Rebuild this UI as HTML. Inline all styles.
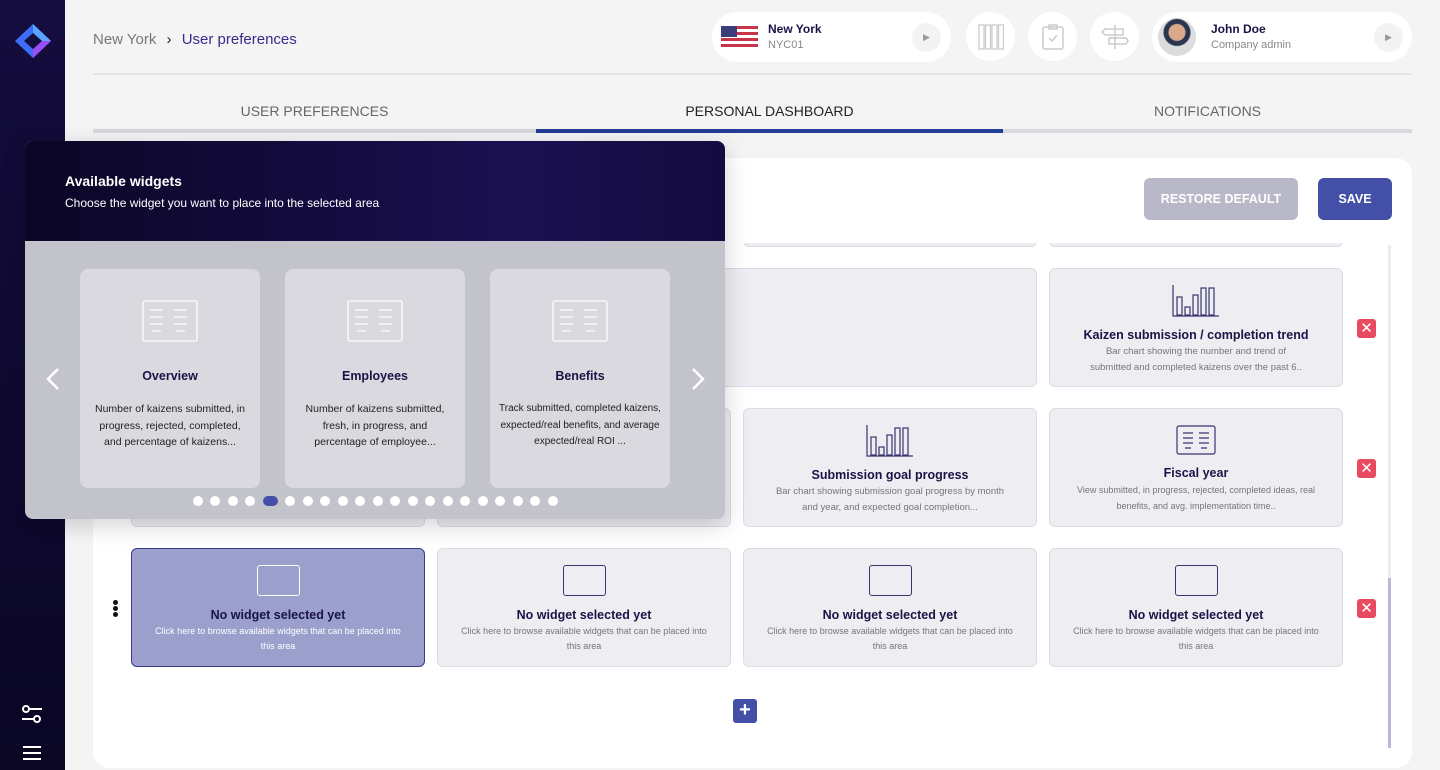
<!DOCTYPE html>
<html><head><meta charset="utf-8"><style>
*{box-sizing:border-box;margin:0;padding:0}
body{width:1440px;height:770px;overflow:hidden;background:#f4f4f5;font-family:"Liberation Sans",sans-serif;position:relative}
.abs{position:absolute}
.side{left:0;top:0;width:65px;height:770px;background:linear-gradient(180deg,#140d3e,#0a0624)}
.pill{background:#fff;border-radius:25px;height:50px;top:12px}
.circ{background:#fff;border-radius:50%;width:49px;height:49px;top:12px}
.card{background:#ededf2;border:1px solid #dcdce4;border-radius:6px;text-align:center}
.card h4{font-size:12.5px;color:#1a1446;margin-top:6px}
.card p{font-size:9.5px;color:#777;line-height:16px;margin-top:2px;padding:0 28px}
.card.e p{font-size:9px;line-height:15px;padding:0 22px}
.x{width:19px;height:19px;background:#e84a5f;border-radius:3px;color:#fff;font-size:15px;line-height:19px;text-align:center;left:1357px}
.ov{left:25px;top:141px;width:700px;height:378px;border-radius:8px;overflow:hidden;background:#c3c3cc;box-shadow:0 6px 24px rgba(0,0,0,.18)}
.wc{top:128px;width:180px;height:219px;background:#d9d9df;border-radius:8px;text-align:center}
.wc h4{font-size:12.5px;color:#1a1446;margin-top:6px}
.wc p{font-size:10.5px;color:#222;line-height:16.5px;margin-top:18px;padding:0 12px}
.dot{top:355px;width:10px;height:10px;border-radius:5px;background:#fff}
</style></head><body>
<div class="abs side">
<svg class="abs" style="left:13px;top:22px" width="40" height="38" viewBox="0 0 40 38"><polygon points="20,2 38,19 20,36 2,19" fill="#3b6ef5"/><polygon points="20,2 38,19 29,19 20,11" fill="#5aa2ff"/><polygon points="38,19 20,36 20,27 29,19" fill="#9a4df2"/><polygon points="20,11 29,19 20,27 11,19" fill="#140d3e"/></svg>
<svg class="abs" style="left:21px;top:704px" width="22" height="20" viewBox="0 0 22 20" fill="none" stroke="#fff" stroke-width="2"><circle cx="5" cy="5" r="3"/><line x1="8" y1="5" x2="21" y2="5"/><circle cx="16" cy="15" r="3"/><line x1="1" y1="15" x2="13" y2="15"/></svg>
<div class="abs" style="left:23px;top:746px;width:18px;height:2px;background:#fff;box-shadow:0 6px 0 #fff,0 12px 0 #fff"></div>
</div>
<div class="abs" style="left:93px;top:31px;font-size:15px;color:#777">New York <span style="color:#222;margin:0 6px">›</span> <span style="color:#3c2a8a">User preferences</span></div>
<div class="abs pill" style="left:712px;width:239px">
<div class="abs" style="left:9px;top:14px;width:37px;height:21px;background:repeating-linear-gradient(#c8354a 0 3px,#fff 3px 6px)"><div style="width:16px;height:11px;background:#3a3f7a"></div></div>
<div class="abs" style="left:56px;top:10px;font-size:12px;font-weight:bold;color:#1a1446">New York</div>
<div class="abs" style="left:56px;top:27px;font-size:11px;color:#888">NYC01</div>
<div class="abs" style="left:200px;top:11px;width:29px;height:29px;border-radius:50%;background:#f3f3f5;color:#999;font-size:9px;line-height:29px;text-align:center">▶</div>
</div>
<div class="abs circ" style="left:966px"><svg style="margin:12px 12px" width="26" height="26" viewBox="0 0 26 26" fill="none" stroke="#ccc" stroke-width="1.3"><rect x="1" y="1" width="5" height="24"/><rect x="7.5" y="1" width="5" height="24"/><rect x="14" y="1" width="5" height="24"/><rect x="20.5" y="1" width="5" height="24"/></svg></div>
<div class="abs circ" style="left:1028px"><svg style="margin:12px 14px" width="22" height="26" viewBox="0 0 22 26" fill="none" stroke="#ccc" stroke-width="1.5"><rect x="1" y="3" width="20" height="22" rx="2"/><rect x="7" y="1" width="8" height="4"/><path d="M7 14l3 3 5-6"/></svg></div>
<div class="abs circ" style="left:1090px"><svg style="margin:12px 11px" width="28" height="26" viewBox="0 0 28 26" fill="none" stroke="#ccc" stroke-width="1.5"><path d="M14 1v24M4 5h18v6H4l-3-3z M8 14h17l2 3-2 3H8z"/></svg></div>
<div class="abs pill" style="left:1152px;width:260px">
<div class="abs" style="left:6px;top:6px;width:38px;height:38px;border-radius:50%;background:radial-gradient(circle at 50% 38%,#d9a98a 0 8px,#2b3550 9px 13px,#dcdcdc 14px)"></div>
<div class="abs" style="left:59px;top:10px;font-size:12px;font-weight:bold;color:#1a1446">John Doe</div>
<div class="abs" style="left:59px;top:27px;font-size:11px;color:#888">Company admin</div>
<div class="abs" style="left:222px;top:11px;width:29px;height:29px;border-radius:50%;background:#f3f3f5;color:#999;font-size:9px;line-height:29px;text-align:center">▶</div>
</div>
<div class="abs" style="left:93px;top:73px;width:1319px;height:2px;background:#e4e4ea"></div>
<div class="abs" style="left:93px;top:103px;width:443px;text-align:center;font-size:14px;color:#666">USER PREFERENCES</div>
<div class="abs" style="left:536px;top:103px;width:467px;text-align:center;font-size:14px;color:#222">PERSONAL DASHBOARD</div>
<div class="abs" style="left:1003px;top:103px;width:409px;text-align:center;font-size:14px;color:#666">NOTIFICATIONS</div>
<div class="abs" style="left:93px;top:129px;width:1319px;height:4px;background:#d8d8e0"></div>
<div class="abs" style="left:536px;top:129px;width:467px;height:4px;background:#213e94"></div>
<div class="abs" style="left:93px;top:158px;width:1319px;height:610px;background:#fff;border-radius:16px"></div>
<div class="abs" style="left:1144px;top:178px;width:154px;height:42px;background:#b8b8c8;border-radius:6px;color:#fff;font-size:12.5px;font-weight:bold;text-align:center;line-height:42px">RESTORE DEFAULT</div>
<div class="abs" style="left:1318px;top:178px;width:74px;height:42px;background:#4450a8;border-radius:6px;color:#fff;font-size:12.5px;font-weight:bold;text-align:center;line-height:42px">SAVE</div>
<div class="abs" style="left:93px;top:243px;width:1300px;height:510px;overflow:hidden">
<div class="abs card" style="left:650px;top:-60px;width:294px;height:64px"></div>
<div class="abs card" style="left:956px;top:-60px;width:294px;height:64px"></div>
</div>
<div class="abs" style="left:1388px;top:245px;width:3px;height:503px;background:#ececf2"></div>
<div class="abs" style="left:1388px;top:578px;width:3px;height:170px;background:#b8b8d8"></div>
<div class="abs card" style="left:131px;top:268px;width:906px;height:119px"></div>
<div class="abs card" style="left:1049px;top:268px;width:294px;height:119px">
<svg style="margin-top:16px" width="48" height="32" viewBox="0 0 48 32" fill="none" stroke="#3a3470" stroke-width="1.2"><path d="M1 0v31h46"/><rect x="5" y="12" width="5" height="18"/><rect x="13" y="22" width="5" height="8"/><rect x="21" y="10" width="5" height="20"/><rect x="29" y="3" width="5" height="27"/><rect x="37" y="3" width="5" height="27"/></svg>
<h4>Kaizen submission / completion trend</h4><p style="padding:0 36px">Bar chart showing the number and trend of submitted and completed kaizens over the past 6..</p></div>
<div class="abs x" style="top:319px">✕</div>
<div class="abs card" style="left:131px;top:408px;width:294px;height:119px"></div>
<div class="abs card" style="left:437px;top:408px;width:294px;height:119px"></div>
<div class="abs card" style="left:743px;top:408px;width:294px;height:119px">
<svg style="margin-top:16px" width="48" height="32" viewBox="0 0 48 32" fill="none" stroke="#3a3470" stroke-width="1.2"><path d="M1 0v31h46"/><rect x="5" y="12" width="5" height="18"/><rect x="13" y="22" width="5" height="8"/><rect x="21" y="10" width="5" height="20"/><rect x="29" y="3" width="5" height="27"/><rect x="37" y="3" width="5" height="27"/></svg>
<h4>Submission goal progress</h4><p>Bar chart showing submission goal progress by month and year, and expected goal completion...</p></div>
<div class="abs card" style="left:1049px;top:408px;width:294px;height:119px">
<svg style="margin-top:16px" width="40" height="30" viewBox="0 0 40 30" fill="none" stroke="#3a3470" stroke-width="1.2"><rect x="1" y="1" width="38" height="28" rx="2"/><path d="M7 8h10M23 8h10M7 13h10M23 13h10M7 18h10M23 18h10M9 23h6M25 23h6"/></svg>
<h4>Fiscal year</h4><p style="padding:0 14px;font-size:9px">View submitted, in progress, rejected, completed ideas, real benefits, and avg. implementation time..</p></div>
<div class="abs x" style="top:459px">✕</div>
<div class="abs card" style="left:131px;top:548px;width:294px;height:119px;background:#9a9fcc;border-color:#3a3a8a">
<div style="width:43px;height:31px;border:1.5px solid #fff;border-radius:3px;margin:16px auto 0"></div>
<h4 style="margin-top:12px">No widget selected yet</h4><p style="font-size:9px;line-height:15px;color:#fff;padding:0 22px">Click here to browse available widgets that can be placed into this area</p></div>
<div class="abs card e" style="left:437px;top:548px;width:294px;height:119px"><div style="width:43px;height:31px;border:1.5px solid #3a3470;border-radius:3px;margin:16px auto 0"></div><h4 style="margin-top:12px">No widget selected yet</h4><p>Click here to browse available widgets that can be placed into this area</p></div>
<div class="abs card e" style="left:743px;top:548px;width:294px;height:119px"><div style="width:43px;height:31px;border:1.5px solid #3a3470;border-radius:3px;margin:16px auto 0"></div><h4 style="margin-top:12px">No widget selected yet</h4><p>Click here to browse available widgets that can be placed into this area</p></div>
<div class="abs card e" style="left:1049px;top:548px;width:294px;height:119px"><div style="width:43px;height:31px;border:1.5px solid #3a3470;border-radius:3px;margin:16px auto 0"></div><h4 style="margin-top:12px">No widget selected yet</h4><p>Click here to browse available widgets that can be placed into this area</p></div>
<div class="abs x" style="top:599px">✕</div>
<div class="abs" style="left:113px;top:600px;width:5px;height:5px;border-radius:50%;background:#111;box-shadow:0 6px 0 #111,0 12px 0 #111"></div>
<div class="abs" style="left:733px;top:699px;width:24px;height:24px;background:#4450a8;border-radius:3px;color:#fff;font-size:20px;line-height:23px;text-align:center;font-weight:bold">+</div>
<div class="abs ov">
<div class="abs" style="left:0;top:0;width:700px;height:100px;background:linear-gradient(90deg,#0b0626,#1a1050 70%,#140c40)">
<div class="abs" style="left:40px;top:32px;color:#fff;font-size:14px;font-weight:bold">Available widgets</div>
<div class="abs" style="left:40px;top:55px;color:#fff;font-size:12px">Choose the widget you want to place into the selected area</div>
</div>
<svg class="abs" style="left:20px;top:226px" width="16" height="24" viewBox="0 0 16 24" fill="none" stroke="#fff" stroke-width="2.5"><path d="M13 2L3 12l10 10"/></svg>
<svg class="abs" style="left:665px;top:226px" width="16" height="24" viewBox="0 0 16 24" fill="none" stroke="#fff" stroke-width="2.5"><path d="M3 2l10 10-10 10"/></svg>
<div class="abs wc" style="left:55px"><svg style="margin-top:31px" width="56" height="42" viewBox="0 0 56 42" fill="none" stroke="#fff" stroke-width="1.3"><rect x="1" y="1" width="54" height="40" rx="2"/><path d="M8 10h13M32 10h13M8 17h13M32 17h13M8 24h13M32 24h13M10 31h9M34 31h9"/></svg><h4 style="margin-top:22px">Overview</h4><p>Number of kaizens submitted, in progress, rejected, completed, and percentage of kaizens...</p></div>
<div class="abs wc" style="left:260px"><svg style="margin-top:31px" width="56" height="42" viewBox="0 0 56 42" fill="none" stroke="#fff" stroke-width="1.3"><rect x="1" y="1" width="54" height="40" rx="2"/><path d="M8 10h13M32 10h13M8 17h13M32 17h13M8 24h13M32 24h13M10 31h9M34 31h9"/></svg><h4 style="margin-top:22px">Employees</h4><p>Number of kaizens submitted, fresh, in progress, and percentage of employee...</p></div>
<div class="abs wc" style="left:465px"><svg style="margin-top:31px" width="56" height="42" viewBox="0 0 56 42" fill="none" stroke="#fff" stroke-width="1.3"><rect x="1" y="1" width="54" height="40" rx="2"/><path d="M8 10h13M32 10h13M8 17h13M32 17h13M8 24h13M32 24h13M10 31h9M34 31h9"/></svg><h4 style="margin-top:22px">Benefits</h4><p style="padding:0 5px;font-size:10px">Track submitted, completed kaizens, expected/real benefits, and average expected/real ROI ...</p></div>
<div class="abs dot" style="left:168px"></div><div class="abs dot" style="left:185px"></div><div class="abs dot" style="left:203px"></div><div class="abs dot" style="left:220px"></div>
<div class="abs dot" style="left:238px;width:15px;background:#4450a8"></div>
<div class="abs dot" style="left:260px"></div><div class="abs dot" style="left:278px"></div><div class="abs dot" style="left:295px"></div><div class="abs dot" style="left:313px"></div><div class="abs dot" style="left:330px"></div><div class="abs dot" style="left:348px"></div><div class="abs dot" style="left:365px"></div><div class="abs dot" style="left:383px"></div><div class="abs dot" style="left:400px"></div><div class="abs dot" style="left:418px"></div><div class="abs dot" style="left:435px"></div><div class="abs dot" style="left:453px"></div><div class="abs dot" style="left:470px"></div><div class="abs dot" style="left:488px"></div><div class="abs dot" style="left:505px"></div><div class="abs dot" style="left:523px"></div>
</div>
</body></html>
